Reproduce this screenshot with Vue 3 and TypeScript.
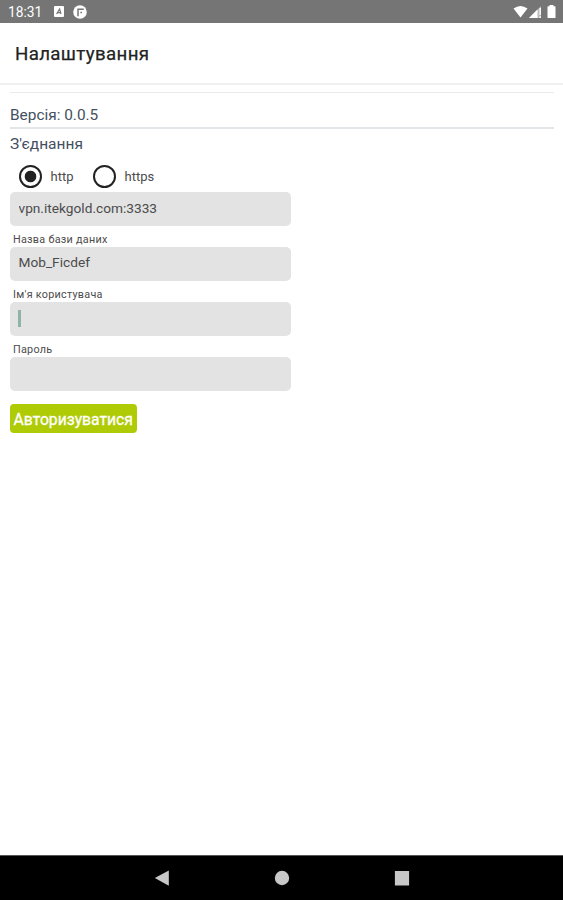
<script setup lang="ts">
import { ref, reactive } from 'vue'

const version = '0.0.5'
const protocols = ['http', 'https']
const protocol = ref('http')

const active = ref('user')

const fields = reactive([
  { id: 'host', label: '', value: 'vpn.itekgold.com:3333', type: 'text' },
  { id: 'base', label: 'Назва бази даних', value: 'Mob_Ficdef', type: 'text' },
  { id: 'user', label: "Ім'я користувача", value: '', type: 'text' },
  { id: 'password', label: 'Пароль', value: '', type: 'password' },
])
</script>

<template>
  <div class="screen">
    <div class="status">
      <span class="clock">18:31</span>
      <svg class="app-icon" width="10" height="11" viewBox="0 0 10 11">
        <rect width="10" height="11" rx="1" fill="#fff" />
        <path d="M2.6 8 L5.6 3 L7 8 M3.8 6.6 H6.5" fill="none" stroke="#757575" stroke-width="1.2" />
      </svg>
      <svg width="14" height="14" viewBox="0 0 14 14">
        <circle cx="7" cy="7" r="6.8" fill="#fff" />
        <path d="M5 11.2 V4.3 H10.8 M7.4 7.6 H9" fill="none" stroke="#757575" stroke-width="1.5" />
      </svg>
      <svg class="signals" width="44" height="14" viewBox="0 0 44 14">
        <path d="M0.5 3.6 Q7.5 -1.6 14.5 3.6 L7.5 12.6 Z" fill="#fff" />
        <path d="M16 13 L28 1 V13 Z" fill="#fff" fill-opacity="0.5" />
        <path d="M16 13 L24.5 4.5 V13 Z" fill="#fff" />
        <path d="M27.2 3 V10 M27.2 11.2 V13" stroke="#fff" stroke-width="1.4" />
        <path d="M36.5 0 H40.5 V1.3 H42 Q42.5 1.3 42.5 2 V12.4 Q42.5 13 42 13 H35 Q34.5 13 34.5 12.4 V2 Q34.5 1.3 35 1.3 H36.5 Z" fill="#fff" />
      </svg>
    </div>

    <header class="header">
      <h1>Налаштування</h1>
    </header>

    <main class="content">
      <div class="version">Версія: {{ version }}</div>
      <div class="section">З'єднання</div>

      <div class="radios">
        <label v-for="p in protocols" :key="p" class="radio">
          <input type="radio" name="protocol" :value="p" v-model="protocol">
          <span>{{ p }}</span>
        </label>
      </div>

      <div v-for="f in fields" :key="f.id" class="field">
        <label v-if="f.label" :for="f.id">{{ f.label }}</label>
        <div class="box">
          <span v-if="active === f.id && !f.value" class="caret"></span>
          <input :id="f.id" :type="f.type" v-model="f.value" spellcheck="false" @focus="active = f.id">
        </div>
      </div>

      <button class="login">Авторизуватися</button>
    </main>

    <nav class="navbar">
      <svg width="16" height="16" viewBox="0 0 16 16"><path d="M0.8 8 L14.8 0.4 V15.8 Z" fill="#c8c8c8" /></svg>
      <svg width="16" height="16" viewBox="0 0 16 16"><circle cx="8" cy="8" r="7.2" fill="#c8c8c8" /></svg>
      <svg width="16" height="16" viewBox="0 0 16 16"><rect x="0.9" y="0.9" width="14.2" height="14.6" rx="0.5" fill="#c8c8c8" /></svg>
    </nav>
  </div>
</template>

<style>
body {
  margin: 0;
  background: #fff;
}
</style>

<style scoped>
.screen {
  height: 900px;
  display: flex;
  flex-direction: column;
  overflow: hidden;
  font-family: Roboto, "Liberation Sans", sans-serif;
  background: #fff;
}

.status {
  height: 23px;
  flex: none;
  box-sizing: border-box;
  padding: 0 6px 0 8px;
  display: flex;
  align-items: center;
  background: #757575;
  color: #fff;
}

.clock {
  width: 46px;
  font-size: 13.8px;
}

.app-icon {
  margin-right: 9px;
}

.signals {
  margin-left: auto;
}

.header {
  height: 62px;
  flex: none;
  box-sizing: border-box;
  padding: 2px 15px 0;
  display: flex;
  align-items: center;
  border-bottom: 2px solid #f0f0f0;
}

h1 {
  margin: 0;
  font-size: 18.7px;
  font-weight: 400;
  letter-spacing: 0.35px;
  -webkit-text-stroke: 0.25px #222;
  color: #222;
}

.content {
  flex: 1;
  margin: 7px 9px 0 10px;
}

.version {
  height: 34px;
  line-height: 45px;
  border-top: 1.5px solid #e9e9e9;
  border-bottom: 2px solid #e4e7e9;
  font-size: 15.4px;
  color: #45505f;
}

.section {
  height: 32px;
  line-height: 31px;
  font-size: 15.5px;
  color: #45505f;
}

.radios {
  height: 31px;
  padding-left: 8.5px;
  display: flex;
  align-items: center;
  gap: 20px;
}

.radio {
  display: flex;
  align-items: center;
  gap: 9px;
  font-size: 13px;
  color: #4c4c4c;
}

.radio input {
  appearance: none;
  width: 23px;
  height: 23px;
  margin: 0;
  border: 2px solid #222;
  border-radius: 50%;
}

.radio input:checked {
  background: radial-gradient(circle, #222 5.4px, transparent 6.2px);
}

.radio span {
  width: 22px;
}

.field label {
  display: block;
  height: 20.6px;
  padding-left: 3px;
  line-height: 27px;
  font-size: 10.8px;
  letter-spacing: 0.27px;
  color: #4c4c4c;
}

.box {
  position: relative;
  width: 281px;
  height: 34.3px;
  margin-left: -0.5px;
  border-radius: 5px;
  background: #e3e3e3;
}

.box input {
  display: block;
  box-sizing: border-box;
  width: 100%;
  height: 31px;
  padding: 0 9px;
  border: none;
  outline: none;
  background: none;
  font-family: inherit;
  font-size: 13.7px;
  color: #4c4c4c;
}

.caret {
  position: absolute;
  left: 8.5px;
  top: 8px;
  width: 3px;
  height: 17px;
  background: #8fb3a8;
}

.login {
  display: block;
  width: 127.5px;
  height: 29px;
  margin: 13.5px 0 0 -0.5px;
  padding: 2px 0 0;
  border: none;
  border-radius: 4px;
  background: #afcb06;
  color: #fff;
  font-family: inherit;
  font-size: 15.7px;
  font-weight: 400;
  -webkit-text-stroke: 0.3px #fff;
}

.navbar {
  height: 45px;
  flex: none;
  box-sizing: border-box;
  padding-bottom: 1px;
  border-top: 1px solid #555;
  display: flex;
  align-items: center;
  justify-content: center;
  gap: 104px;
  background: #000;
}
</style>
